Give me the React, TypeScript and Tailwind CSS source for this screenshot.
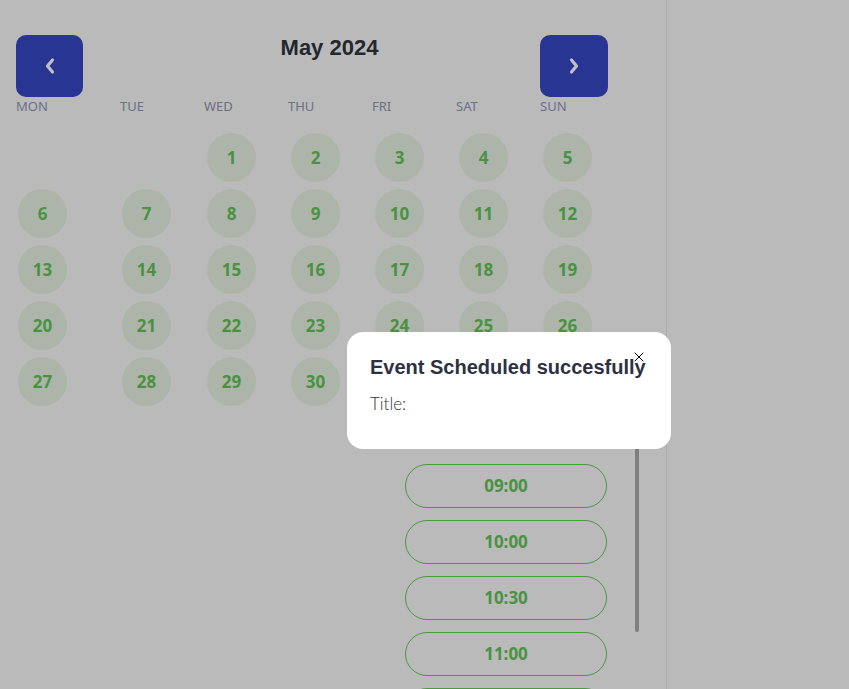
import { X } from "lucide-react";

const weekDays = ["MON", "TUE", "WED", "THU", "FRI", "SAT", "SUN"];

// May 2024 starts on a Wednesday
const days: (number | null)[] = [
  null,
  null,
  ...Array.from({ length: 31 }, (_, i) => i + 1),
].slice(0, 33);

const slots = ["09:00", "10:00", "10:30", "11:00", "11:30"];

function Chevron({ dir }: { dir: "left" | "right" }) {
  return (
    <svg width="12" height="18" viewBox="0 0 12 18" fill="none">
      <path
        d={dir === "left" ? "M8.5 3L3.5 9l5 6" : "M3.5 3l5 6-5 6"}
        stroke="#bfbfc8"
        strokeWidth="3.2"
        strokeLinecap="round"
        strokeLinejoin="round"
      />
    </svg>
  );
}

export default function App() {
  return (
    <div className="relative h-[689px] w-full overflow-hidden bg-[#bababa]">
      <div className="flex h-full">
        <section className="w-[667px] shrink-0 border-r border-[#aaaaaa] pl-4 pt-[35px]">
          <div className="flex w-[592px] items-start">
            <button className="flex h-[62px] w-[67px] items-center justify-center rounded-[10px] bg-[#283593]">
              <Chevron dir="left" />
            </button>
            <h2 className="flex-1 pl-[36px] text-center font-['Liberation_Sans',Arial,sans-serif] text-[22px] font-bold leading-[26px] text-[#24272e]">
              May 2024
            </h2>
            <button className="flex h-[62px] w-[68px] items-center justify-center rounded-[10px] bg-[#283593]">
              <Chevron dir="right" />
            </button>
          </div>

          <div className="-mt-px grid grid-cols-[104px_repeat(6,84px)] font-['Noto_Sans',sans-serif]">
            {weekDays.map((d) => (
              <div key={d} className="h-[20px] text-[13px] leading-[20px] text-[#6b6f87]">
                {d}
              </div>
            ))}
          </div>

          <div className="mt-[17px] grid grid-cols-[104px_repeat(6,84px)] gap-y-[7px] font-['Noto_Sans',sans-serif]">
            {days.map((d, i) => (
              <div key={i} className="h-[49px]">
                {d && (
                  <div
                    className={`${i < 2 || i % 7 < 2 ? "ml-[2px]" : "ml-[3px]"} flex h-[49px] w-[49px] items-center justify-center rounded-full bg-[#adb5aa] text-[17px] font-bold text-[#4a9242]`}
                  >
                    {d}
                  </div>
                )}
              </div>
            ))}
          </div>

          <div className="ml-[389px] mt-[58px] flex gap-[28px]">
            <div className="flex w-[202px] flex-col gap-[12px] font-['Noto_Sans',sans-serif]">
              {slots.map((s) => (
                <button
                  key={s}
                  className="h-[44px] shrink-0 rounded-full border border-[#4a9a3f] text-[17px] font-bold text-[#4a9242]"
                >
                  {s}
                </button>
              ))}
            </div>
            <div className="-mt-[20px] h-[188px] w-[4px] rounded-full bg-[#7f7f7f]" />
          </div>
        </section>
        <div className="flex-1" />
      </div>

      <div className="absolute left-[347px] top-[332px] h-[117px] w-[324px] rounded-[16px] bg-white pl-[23px] pt-[23px]">
        <button className="absolute right-[24px] top-[17px] text-black">
          <X size={16} strokeWidth={1.5} />
        </button>
        <h3 className="font-['Liberation_Sans',Arial,sans-serif] text-[20px] font-bold leading-[24px] text-[#2d3142]">
          Event Scheduled succesfully
        </h3>
        <p className="mt-[14px] font-['Lato',sans-serif] text-[17px] font-light leading-[22px] text-[#333333]">
          Title:
        </p>
      </div>
    </div>
  );
}
